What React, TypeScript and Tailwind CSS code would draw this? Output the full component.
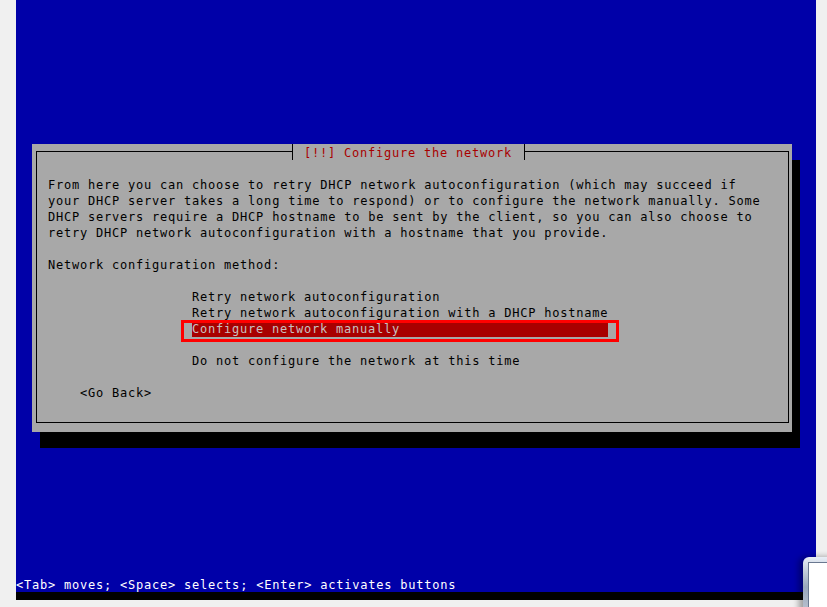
import React from "react";

const mono = { fontFamily: '"DejaVu Sans Mono", "Liberation Mono", monospace' };

export default function App() {
  return (
    <div className="relative w-[827px] h-[607px] bg-[#f0f0f0] overflow-hidden">
      <div className="ml-[16px] w-[800px] h-[600px] flex flex-col">
        <div
          className="h-[592px] bg-[#0000a8] flex flex-col text-[12px] leading-[16px] tracking-[0.78px] whitespace-pre"
          style={mono}
        >
          <div className="pt-[144px] pl-[16px]">
            <div className="relative w-[760px] h-[288px] bg-[#a8a8a8] shadow-[8px_16px_0_0_#000] text-black pl-[4px] pt-[7px]">
              <div className="w-[753px] h-[272px] border border-black">
                <div className="pt-[25px] pl-[11px]">
                  <div>From here you can choose to retry DHCP network autoconfiguration (which may succeed if</div>
                  <div>your DHCP server takes a long time to respond) or to configure the network manually. Some</div>
                  <div>DHCP servers require a DHCP hostname to be sent by the client, so you can also choose to</div>
                  <div>retry DHCP network autoconfiguration with a hostname that you provide.</div>
                  <div className="h-[16px]" />
                  <div>Network configuration method:</div>
                  <div className="h-[16px]" />
                  <div className="ml-[144px] w-[416px]">
                    <div>Retry network autoconfiguration</div>
                    <div>Retry network autoconfiguration with a DHCP hostname</div>
                    <div className="bg-[#a80000] text-[#c8c0c0] -mt-[1px] pt-[1px]">Configure network manually</div>
                    <div className="h-[16px]" />
                    <div>Do not configure the network at this time</div>
                  </div>
                  <div className="h-[16px]" />
                  <div className="ml-[32px]">&lt;Go Back&gt;</div>
                </div>
              </div>
              <div className="absolute left-[260px] top-0 h-[16px] w-[233px] border-x border-black bg-[#a8a8a8] pl-[11px] pt-[1px] text-[#a80000]">
                [!!] Configure the network
              </div>
              <div className="absolute left-[149px] top-[176px] w-[438px] h-[22px] border-[3px] border-[#ff0000]" />
            </div>
          </div>
          <div className="mt-auto pt-[1px] h-[16px] text-white">
            &lt;Tab&gt; moves; &lt;Space&gt; selects; &lt;Enter&gt; activates buttons
          </div>
        </div>
        <div className="h-[8px] bg-black" />
      </div>
      <div className="absolute left-[803px] top-[557px] w-[40px] h-[60px] rounded-tl-[6px] bg-gradient-to-b from-[#e8eef6] via-[#9aa8bc] to-[#c0c8d4] p-[5px] pr-0 pb-0 shadow-[-4px_0_6px_rgba(0,0,0,0.35)]">
        <div className="w-full h-full bg-white border-l border-t border-[#6a7890]" />
      </div>
    </div>
  );
}
